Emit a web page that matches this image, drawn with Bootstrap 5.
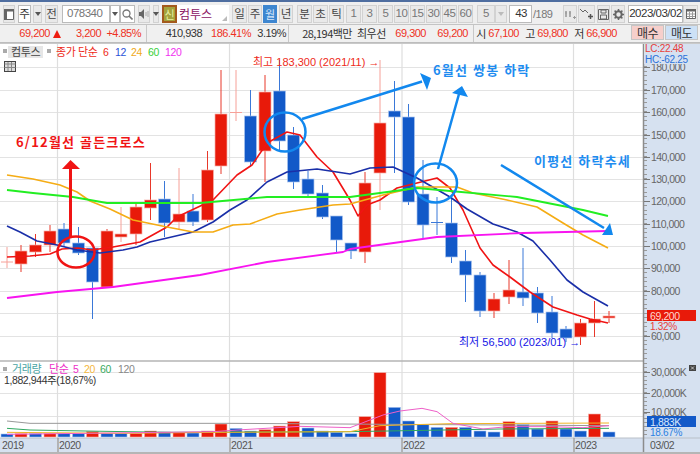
<!DOCTYPE html>
<html lang="ko">
<head>
<meta charset="utf-8">
<title>컴투스 월봉 차트</title>
<link href="https://cdn.jsdelivr.net/npm/bootstrap@5.3.0/dist/css/bootstrap.min.css" rel="stylesheet">
<style>
html,body{width:700px;height:454px;overflow:hidden;background:#fff}
body{font-family:"Liberation Sans","Noto Sans CJK KR",sans-serif;font-size:11px;line-height:1}
.kr{font-family:"Noto Sans CJK KR","Liberation Sans",sans-serif}
.topbar{height:2px;background:#4f6ea0}
.tools{height:23px;background:#efefef;padding:3px 0 2px 3px;border-bottom:1px solid #c4c4c4}
.tools>*{flex:none;height:18px;display:flex;align-items:center;justify-content:center}
.tk{background:#e9e9e9;border:1px solid #d2d2d2;color:#444;font-size:11.5px}
.tw{background:#fff;border:1px solid #bbb;color:#333;font-size:11.5px}
.tactive{background:#3d86d0;border:1px solid #3d86d0;color:#d9e8fa}
.num{letter-spacing:-.5px;color:#777}
.num-dark{color:#333}
.new-box{background:#a3a33c;border:2px solid #a35a1c;color:#e8f0a0;font-size:11px}
.stock-field{background:#fff;color:#8c1464;font-size:12px;justify-content:flex-start!important;padding-left:2px;position:relative}
.stock-field i{position:absolute;right:2px;bottom:2px;border-left:5px solid transparent;border-bottom:5px solid #bbb}
.g1{margin-left:1px}.g2{margin-left:2px}.g3{margin-left:3px}.g4{margin-left:4px}.g8{margin-left:8px}
.w6{width:6px}.w9{width:9px}.w10{width:10px}.w12{width:12px}.w13{width:13px}.w14{width:14px}.w15{width:15px}.w17{width:17px}.w18{width:18px}.w22{width:22px}.w23{width:23px}.w48{width:48px}.w52{width:52px}.w55{width:55px}
.dd::after{content:"";border-left:3px solid transparent;border-right:3px solid transparent;border-top:4px solid #555}
.dd.off::after{border-top-color:#bbb}
.info{height:18px;background:#f0f0f0;border-bottom:1px solid #bdbdbd;color:#333;font-size:11px;letter-spacing:-.5px}
.icell{height:17px;border-right:1px solid #c8c8c8;flex:none;align-items:center;white-space:nowrap}
.icell>span{flex:none}
.up{color:#ee3124}
.c146{width:147px}.c141{width:142px}.c184{width:185px}.c154{width:155px}
.s40{width:40px}.s62{width:50px}.s55{width:55px}.s49{width:49px}.s35{width:35px}.s63{width:63px}.s30{width:31px;margin-left:5px}.s39{width:38px}.s42{width:42px}.s12{width:14px}.s33{width:31px}
.tri{width:0;height:0;margin-left:3px;border-left:4.5px solid transparent;border-right:4.5px solid transparent;border-bottom:8px solid #ee1c10}
.order{width:33px;height:15px;border:1px solid #c5c5c5;font-size:12px;color:#333;flex:none;display:flex;align-items:center;justify-content:center}
.buy{background:#f6cfcb;margin-left:2px}.sell{background:#cde1f6;margin-left:1px}
.sep{height:1px;background:#c9c9c9}
svg.chart{display:block}
svg text{font-family:"Liberation Sans","Noto Sans CJK KR",sans-serif;font-size:10.5px;letter-spacing:-.4px}
svg text.anno{font-family:"Noto Sans CJK KR",sans-serif;font-size:13px;font-weight:700;letter-spacing:1.2px}
svg text.ax{fill:#666;letter-spacing:-.55px}
svg text.note{font-size:11px;letter-spacing:0}
svg text.lg{font-size:11px}
svg text.side{font-size:10px;letter-spacing:-.3px}
</style>
</head>
<body>
<div class="topbar"></div>
<div class="tools d-flex">
  <div class="tk w12"><svg width="10" height="11" viewBox="0 0 10 11"><path d="M.5.5h9v10h-9z" fill="#fff" stroke="#666"/><path d="M0 0h10v2.500H0zM0 0h3v11H0z" fill="#666"/></svg></div>
  <div class="tw w13 g3 kr">주</div>
  <div class="tk w9 dd g2"></div>
  <div class="tk w13 g3 kr">전</div>
  <div class="tw w48 g4 justify-content-start ps-1 num">078340</div>
  <div class="tw w10 dd"></div>
  <div class="tw w15"><svg width="11" height="11" viewBox="0 0 11 11"><circle cx="4.500" cy="4.500" r="3.500" fill="none" stroke="#777" stroke-width="1.300"/><path d="M7 7l3.500 3.500" stroke="#777" stroke-width="1.600"/></svg></div>
  <div class="tk w12 g3"><svg width="10" height="10" viewBox="0 0 10 10"><path d="M0 3h2l3-3v10L2 7H0z" fill="#666"/><path d="M7 3v4M9 2v6" stroke="#aaa"/></svg></div>
  <div class="tk w6 dd g3"></div>
  <div class="new-box w15 g3 kr">신</div>
  <div class="stock-field w52 kr">컴투스<i></i></div>
  <div class="tk w15 g3 kr">일</div>
  <div class="tk w14 g1 kr">주</div>
  <div class="tactive w14 g1 kr">월</div>
  <div class="tk w14 g2 kr">년</div>
  <div class="tk w15 g4 kr">분</div>
  <div class="tk w15 g1 kr">초</div>
  <div class="tk w15 g1 kr">틱</div>
  <div class="tk w15 g2 num">1</div>
  <div class="tk w15 g1 num">3</div>
  <div class="tk w15 g1 num">5</div>
  <div class="tk w15 g1 num">10</div>
  <div class="tk w15 g1 num">15</div>
  <div class="tk w15 g1 num">30</div>
  <div class="tk w15 g1 num">45</div>
  <div class="tk w15 g1 num">60</div>
  <div class="tk w18 g4 num">5</div>
  <div class="tk w12 dd off"></div>
  <div class="tw w23 g2 justify-content-end pe-1 num num-dark">43</div>
  <div class="w22 g1 num justify-content-start">/189</div>
  <div class="tk w14 g8"><svg width="12" height="11" viewBox="0 0 12 11"><path d="M2 2v6M6 2v6" stroke="#aaa" stroke-width="2"/><path d="M1 4h2M5 4h2M9 8.500h3M10.500 7v3" stroke="#999"/></svg></div>
  <div class="tk w17 g1"><svg width="14" height="12" viewBox="0 0 14 12"><path d="M0 1l3 3 2-2 3 3" fill="none" stroke="#666"/><path d="M8 8.500h5M10.500 6v5" stroke="#555" stroke-width="1.500"/></svg></div>
  <div class="tk w13 g2"><svg width="11" height="11" viewBox="0 0 11 11"><path d="M.5.500h10v10H.5z" fill="none" stroke="#666"/><path d="M3 1h5v3H3zM2.500 6h6v4h-6z" fill="none" stroke="#666"/></svg></div>
  <div class="tk w14 g1"><svg width="11" height="11" viewBox="0 0 11 11"><circle cx="5.500" cy="5.500" r="3.200" fill="none" stroke="#666" stroke-width="2"/><path d="M5.500 0v2M5.500 9v2M0 5.500h2M9 5.500h2M1.600 1.600l1.400 1.400M8 8l1.400 1.400M1.600 9.400L3 8M8 3l1.400-1.400" stroke="#666" stroke-width="1.500"/></svg></div>
  <div class="tw w55 g3 num num-dark">2023/03/02</div>
  <div class="tk w15"><svg width="10" height="10" viewBox="0 0 10 10"><path d="M.5.500h9v9h-9z" fill="#fff" stroke="#666"/><path d="M0 0h10v2.500H0z" fill="#666"/><path d="M3.500 3v6M6.500 3v6M1 5h8M1 7.500h8" stroke="#999"/></svg></div>
</div>
<div class="info d-flex">
  <div class="icell c146 d-flex up">
    <span class="s62 text-end">69,200</span><span class="tri"></span>
    <span class="s40 text-end">3,200</span><span class="s40 text-end">+4.85%</span>
  </div>
  <div class="icell c141 d-flex">
    <span class="s55 text-end">410,938</span><span class="s49 text-end up">186.41%</span><span class="s35 text-end">3.19%</span>
  </div>
  <div class="icell c184 d-flex">
    <span class="s63 text-end kr">28,194백만</span><span class="s30 kr">최우선</span><span class="s39 text-end up">69,300</span><span class="s42 text-end up">69,200</span>
  </div>
  <div class="icell c154 d-flex border-end-0">
    <span class="s12 text-center kr">시</span><span class="s33 text-end up">67,100</span><span class="s12 ms-1 text-center kr">고</span><span class="s33 text-end up">69,800</span><span class="s12 ms-1 text-center kr">저</span><span class="s33 text-end up">66,900</span>
  </div>
  <div class="order buy kr">매수</div>
  <div class="order sell kr">매도</div>
</div>
<div class="sep"></div>
<svg class="chart" id="c" width="700" height="410" viewBox="0 44 700 410" xmlns="http://www.w3.org/2000/svg">
  <rect x="643" y="44" width="57" height="410" fill="#d6e1f0"/>
  <rect x="0" y="438" width="643" height="14" fill="#d6e1f0"/>
  <g id="grid"></g>
  <g id="ticks"></g>
  <g id="vol"></g>
  <g id="volma" fill="none" stroke-width="1"></g>
  <g id="candles"></g>
  <g id="ma" fill="none" stroke-linejoin="round"></g>

  <!-- annotations -->
  <g fill="none" stroke-width="2.500">
    <ellipse cx="76" cy="252" rx="18.500" ry="15.500" stroke="#f01414"/>
    <ellipse cx="285" cy="132" rx="20.500" ry="19.500" stroke="#1288ee"/>
    <ellipse cx="435.500" cy="183" rx="21.500" ry="19.500" stroke="#1288ee"/>
    <path d="M70.500 237V167" stroke="#f01414" stroke-width="3"/>
    <path d="M302 119L422 81.500M438 169L459 94M501 165L604 228" stroke="#1288ee" stroke-width="2.500"/>
  </g>
  <path d="M70.500 160L80 169H62z" fill="#f01414"/>
  <path d="M431 78L420 73L427 90z M462 86L452 93L468 97z M613 235L602 235L610 223z" fill="#1288ee"/>
  <text class="anno" x="16" y="147" fill="#f01414">6/12월선 골든크로스</text>
  <text class="anno" x="433" y="75" fill="#1e8cf0">6월선 쌍봉 하락</text>
  <text class="anno" x="534" y="166" fill="#1e8cf0">이평선 하락추세</text>
  <text class="note" x="253" y="66" fill="#ee2a20">최고 183,300 (2021/11) →</text>
  <text class="note" x="459" y="346" fill="#1414e6">최저 56,500 (2023/01) →</text>

  <!-- legend main -->
  <rect x="3" y="49" width="4" height="4" fill="#aaa"/>
  <rect x="8" y="46" width="35" height="12" fill="#e6e6e6"/>
  <text class="lg" x="11" y="56" fill="#444">컴투스</text>
  <rect x="47" y="49" width="4" height="4" fill="#aaa"/>
  <text class="lg" x="56" y="56" fill="#ee2a20">종가 단순</text>
  <text x="103" y="56" fill="#ee2a20">6</text>
  <text x="115" y="56" fill="#2a52d8">12</text>
  <text x="131" y="56" fill="#f0a818">24</text>
  <text x="148" y="56" fill="#38d038">60</text>
  <text x="165" y="56" fill="#f030f0">120</text>
  <g><rect x="4.500" y="61.500" width="11" height="10" fill="#ddd" stroke="#444"/><path d="M4.500 64h11M8 62v9M11.500 62v9M4.500 67.500h11" stroke="#888" fill="none"/></g>

  <!-- legend volume -->
  <rect x="3" y="367" width="4" height="4" fill="#aaa"/>
  <text class="lg" x="12" y="373" fill="#4aa5a5">거래량</text>
  <text class="lg" x="49" y="373" fill="#ee30c8">단순</text>
  <text x="73" y="373" fill="#ee30c8">5</text>
  <text x="84" y="373" fill="#f5b840">20</text>
  <text x="100" y="373" fill="#3aaa60">60</text>
  <text x="118" y="373" fill="#888">120</text>
  <text x="4" y="384" fill="#333">1,882,944주(18,67%)</text>

  <!-- price side labels -->
  <rect x="644" y="44" width="56" height="20" fill="#d6e1f0"/>
  <text class="side" x="645" y="52" fill="#e84038">LC:22.48</text>
  <text class="side" x="645" y="62.500" fill="#2a70d8">HC:-62.25</text>
  <rect x="647" y="310" width="49" height="11" fill="#e81a0a"/>
  <text x="650" y="319.500" fill="#ffd8d0">69,200</text>
  <text class="side" x="650" y="330" fill="#e84038">1.32%</text>
  <rect x="647" y="416" width="49" height="11" fill="#1259c8"/>
  <text x="650" y="425.500" fill="#d8e8ff">1,883K</text>
  <text class="side" x="650" y="436" fill="#2a80e0">18.67%</text>
  <rect x="689" y="365" width="7" height="6" fill="#444"/>
  <path d="M691 366.500l3 3M694 366.500l-3 3" stroke="#ddd" stroke-width=".8"/>

  <!-- date axis -->
  <g fill="#555">
    <text x="2" y="449">2019</text><text x="59" y="449">2020</text><text x="231" y="449">2021</text><text x="403" y="449">2022</text><text x="575" y="449">2023</text><text x="650" y="449">03/02</text>
  </g>
</svg>
<script>
var N='http://www.w3.org/2000/svg';
function el(p,t,a){var e=document.createElementNS(N,t);for(var k in a)e.setAttribute(k,a[k]);document.getElementById(p).appendChild(e);return e}
function ln(p,x1,y1,x2,y2,s,w){el(p,'line',{x1:x1,y1:y1,x2:x2,y2:y2,stroke:s,'stroke-width':w||1})}
// grid
[67,90,112,135,157,179,201,224,246,268,291,313,336].forEach(function(y){ln('grid',0,y+.5,643,y+.5,'#e3e3e3',1.2)});
[372,393,416].forEach(function(y){ln('grid',0,y+.5,643,y+.5,'#e3e3e3',1)});
[57.5,229.5,402,573.5].forEach(function(x){ln('grid',x,44,x,452,'#dedede',1.2)});
ln('grid',0,361,643,361,'#b5b5b5',1.5);ln('grid',0,438,700,438,'#b9c0c8',1);
ln('grid',0,453,700,453,'#b5b5b5',2);ln('grid',643.5,44,643.5,452,'#8c8c8c',1.5);
[58,230,402,574].forEach(function(x){ln('grid',x,438,x,452,'#888',1)});
// axis ticks & labels
for(var y=44;y<361;y+=4.48)ln('ticks',644,Math.round(y)+.5,647,Math.round(y)+.5,'#999',1);
[['180,000',67],['170,000',90],['160,000',112],['150,000',135],['140,000',157],['130,000',179],['120,000',201],['110,000',224],['100,000',246],['90,000',268],['80,000',291],['60,000',336]].forEach(function(a){
 var t=el('ticks','text',{x:651,y:a[1]+4,'class':'ax'});t.textContent=a[0];
 ln('ticks',644,a[1]+.5,650,a[1]+.5,'#777',1)});
for(var y=363;y<438;y+=4.2)ln('ticks',644,Math.round(y)+.5,647,Math.round(y)+.5,'#999',1);
[['30,000K',372],['20,000K',393],['10,000K',412]].forEach(function(a){var t=el('ticks','text',{x:651,y:a[1]+4,'class':'ax'});t.textContent=a[0];ln('ticks',644,a[1]+.5,650,a[1]+.5,'#777',1)});
// candles: x, color, top, bottom, high, low, light-wick
var R='#e81a0a',B='#1259c8',C=[
[7,'r',261.500,262.500,247,268,1],[21,'r',251,264,245,272],[35.500,'r',245,252,234,257],[50,'r',231,245,225,252],[64,'b',229,243,223,247],[78.500,'b',243,253,227,255],[92.500,'b',248,282,248,319],[107,'r',231,287,229,287],[121,'r',234,237,207,242,1],[136,'r',207,234,202,245],[150.500,'r',200,208,163,220],[164.500,'b',199,223,181,237],[179,'r',214,222,168,230,1],[193,'b',211,222,194,226],[207.500,'r',170,220,151,222],[221,'r',114,166,70,174],[236,'r',112,113,70,121,1],[250.500,'b',116,162,90,167],[265,'r',92,151,75,182],[279.500,'b',91,141,60,150],[293.500,'b',135,182,127,189],[308,'b',179,194,171,198],[322.500,'b',193,217,185,219],[336.500,'b',216,240,216,252],[351,'b',243,251,243,259],[365,'r',183,252,172,263],[380,'r',123,173,60,210,1],[394.500,'b',111,117,81,173],[408.500,'b',117,202,104,205],[423,'b',194,225,160,238],[437,'b',222,222.800,197,235,2],[451.500,'b',223,257,197,263],[465.500,'b',261,275,250,302],[480,'b',275,311,272,317],[494,'r',299,311,293,318],[509,'r',290,297,260,304],[523,'b',292,298,248,306],[537.500,'b',293,313,287,323],[552,'b',312,333,296,338],[566,'b',329,338,326,342],[580.500,'r',323,337,319,345],[594.500,'r',319,323,301,337],[609,'r',316,318,311,323]];
C.forEach(function(c){var red=c[1]=='r',col=red?R:B,wk=c[6]==1?'#f6a098':(red?'#e8382a':'#3a78d8');
 ln('candles',c[0],c[4],c[0],c[5],wk,1);
 var h=c[3]-c[2];
 if(h<2){ln('candles',c[0]-6,c[2]+.5,c[0]+6,c[2]+.5,c[6]==1?'#f6a098':'#3a78d8',1);return}
 el('candles','rect',{x:c[0]-6,y:c[2],width:12,height:h,fill:col,stroke:red?'#f5b0a8':'#a9c4ee','stroke-width':.7});
});
// volume
var V=[[7,'b',237],[21,'r',236],[35.500,'b',236],[50,'r',236],[64,'b',236],[78.500,'b',236],[92.500,'r',229],[107,'b',235],[121,'b',235],[136,'r',235],[150.500,'r',228],[164.500,'b',231],[179,'r',233],[193,'b',234],[207.500,'r',228],[221,'r',207],[236,'b',220],[250.500,'b',228],[265,'r',224],[279.500,'r',213],[293.500,'r',200],[308,'b',219],[322.500,'b',228],[336.500,'b',232],[351,'b',236],[365,'r',185],[380,'r',53],[394.500,'b',157],[408.500,'b',198],[423,'b',209],[437,'b',217],[451.500,'r',217],[465.500,'b',217],[480,'b',228],[494,'b',231],[509,'r',200],[523,'b',209],[537.500,'b',222],[552,'r',198],[566,'b',222],[580.500,'b',228],[594.500,'r',177],[609,'b',231]];
V.forEach(function(v){var t=355+v[2]/3;el('vol','rect',{x:v[0]-6,y:t,width:12,height:437-t,fill:v[1]=='r'?R:B,stroke:v[1]=='r'?'#f5b0a8':'#a9c4ee','stroke-width':.6})});
function poly(g,pts,s,w){el(g,'polyline',{points:pts.map(function(p){return p[0]+','+p[1]}).join(' '),stroke:s,'stroke-width':w})}
function vz(a){return a.map(function(p){return[p[0],355+p[1]/3]})}
poly('volma',vz([[7,198],[30,205],[230,205],[609,212]]),'#999',1);
poly('volma',vz([[7,220],[30,225],[85,228],[170,232],[350,230],[500,222],[609,220]]),'#2ea860',1);
poly('volma',vz([[7,232],[120,235],[220,232],[350,230],[380,212],[450,206],[609,204]]),'#f0b428',1);
poly('volma',vz([[7,238],[213,230],[243,224],[300,214],[350,218],[383,180],[400,168],[422,160],[437,170],[453,205],[483,222],[507,215],[550,215],[583,218],[609,212]]),'#ee60c8',1);
// moving averages
poly('ma',[[7,257],[30,256],[50,254],[62,249],[78,248],[92,250],[113,247],[140,242],[167,227],[177,217],[213,200],[237,175],[252,165],[267,143],[287,132],[300,135],[317,157],[333,172],[350,200],[358,216],[367,205],[380,200],[397,188],[417,183],[437,178],[450,188],[463,210],[480,248],[493,265],[510,277],[530,292],[553,307],[577,315],[590,319],[608,323]],'#f01414',1.600);
poly('ma',[[7,226],[20,232],[37,241],[57,245],[77,250],[100,253],[123,250],[137,247],[150,242],[193,232],[213,222],[230,210],[247,200],[267,182],[287,172],[317,169],[350,174],[370,168],[393,167],[417,178],[450,197],[467,209],[493,224],[517,232],[533,241],[550,260],[567,280],[583,292],[608,306]],'#1a2fa8',1.600);
poly('ma',[[7,175],[33,179],[60,185],[77,192],[90,201],[110,209],[133,220],[167,227],[193,232],[213,232],[233,225],[250,224],[277,214],[300,210],[333,205],[350,204],[383,195],[417,187],[457,187],[473,193],[507,200],[537,207],[563,223],[583,235],[608,248]],'#f5ac14',1.600);
poly('ma',[[7,190],[33,193],[73,197],[107,203],[200,203],[267,197],[350,197],[417,188],[450,191],[517,197],[583,210],[608,216]],'#22ee22',1.800);
poly('ma',[[7,298],[57,292],[113,287],[200,275],[267,262],[343,252],[350,249],[437,237],[523,233],[608,231]],'#f814f0',1.800);
</script>
<script src="https://cdn.jsdelivr.net/npm/bootstrap@5.3.0/dist/js/bootstrap.bundle.min.js"></script>
</body>
</html>
